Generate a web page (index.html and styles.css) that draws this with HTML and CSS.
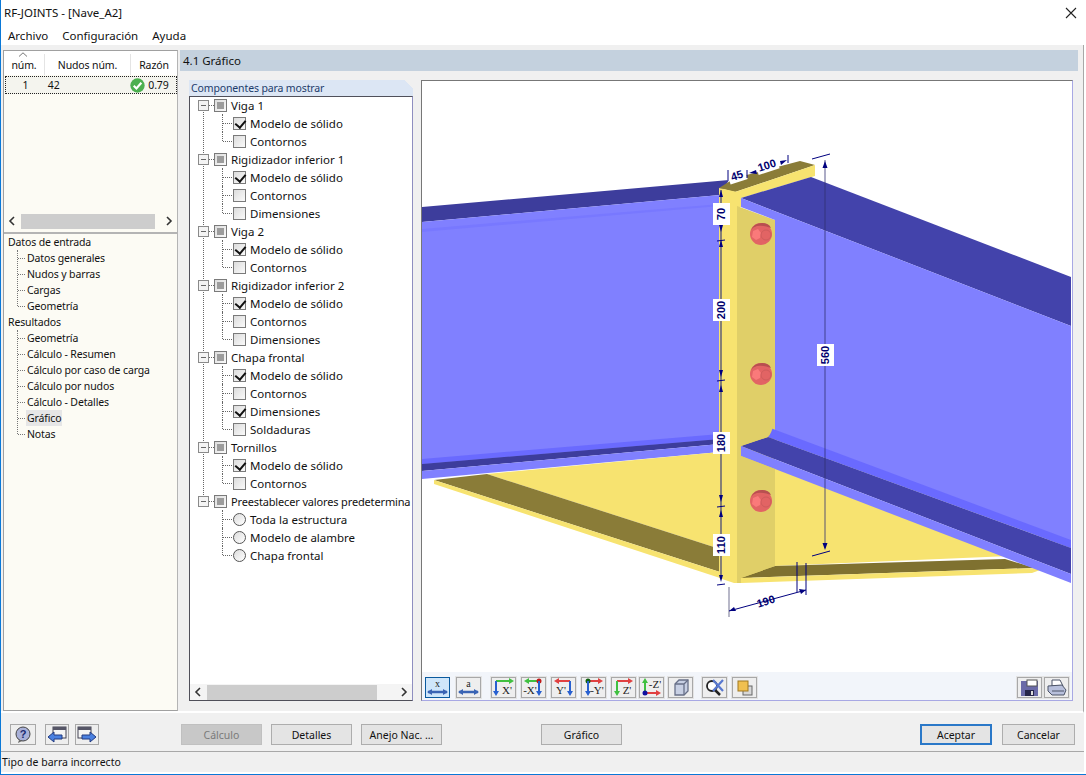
FILE: index.html
```html
<!DOCTYPE html>
<html lang="es">
<head>
<meta charset="utf-8">
<title>RF-JOINTS - [Nave_A2]</title>
<link rel="stylesheet" href="styles.css">
</head>
<body>
<div class="app">
  <header class="titlebar">
    <span class="title">RF-JOINTS - [Nave_A2]</span>
    <svg class="close" width="12" height="12" viewBox="0 0 12 12"><path d="M1 1L11 11M11 1L1 11" stroke="#222" stroke-width="1.1" fill="none"/></svg>
  </header>
  <nav class="menu"><span>Archivo</span><span>Configuración</span><span>Ayuda</span></nav>
  <main class="main">
    <aside class="side">
      <div class="thead">
        <span class="c1">núm.<svg class="sort" width="10" height="5" viewBox="0 0 10 5"><path d="M1 4.500L5 .8L9 4.500" stroke="#777" fill="none"/></svg></span><span class="c2">Nudos núm.</span><span class="c3">Razón</span>
      </div>
      <div class="trow">
        <span class="c1">1</span><span class="c2">42</span>
        <span class="c3 ok"><svg width="15" height="15" viewBox="0 0 14 14"><circle cx="7" cy="7" r="6.700" fill="#4caf50"/><path d="M3.500 7.200L6 9.800L10.600 4.400" stroke="#fff" stroke-width="2" fill="none"/></svg>0.79</span>
      </div>
      <div class="side-fill"></div>
      <div class="hscroll side-scroll">
        <svg width="8" height="10" viewBox="0 0 8 10"><path d="M6 1L2 5L6 9" stroke="#333" stroke-width="1.600" fill="none"/></svg>
        <div class="thumb"></div>
        <svg width="8" height="10" viewBox="0 0 8 10"><path d="M2 1L6 5L2 9" stroke="#333" stroke-width="1.600" fill="none"/></svg>
      </div>
      <div class="nav">
        <div class="nav-head">Datos de entrada</div>
        <ul class="nav-list">
          <li>Datos generales</li><li>Nudos y barras</li><li>Cargas</li><li>Geometría</li>
        </ul>
        <div class="nav-head">Resultados</div>
        <ul class="nav-list">
          <li>Geometría</li><li>Cálculo - Resumen</li><li>Cálculo por caso de carga</li><li>Cálculo por nudos</li><li>Cálculo - Detalles</li><li><span class="current">Gráfico</span></li><li>Notas</li>
        </ul>
      </div>
    </aside>
    <section class="content">
      <h1 class="head">4.1 Gráfico</h1>
      <div class="body">
        <div class="panel">
          <div class="tab">Componentes para mostrar</div>
          <div class="treebox">
            <div class="tree">
              <div class="group">
                <div class="parent"><i class="exp"></i><i class="box mixed"></i>Viga 1</div>
                <div class="kid"><i class="box on"></i>Modelo de sólido</div>
                <div class="kid"><i class="box"></i>Contornos</div>
              </div>
              <div class="group">
                <div class="parent"><i class="exp"></i><i class="box mixed"></i>Rigidizador inferior 1</div>
                <div class="kid"><i class="box on"></i>Modelo de sólido</div>
                <div class="kid"><i class="box"></i>Contornos</div>
                <div class="kid"><i class="box"></i>Dimensiones</div>
              </div>
              <div class="group">
                <div class="parent"><i class="exp"></i><i class="box mixed"></i>Viga 2</div>
                <div class="kid"><i class="box on"></i>Modelo de sólido</div>
                <div class="kid"><i class="box"></i>Contornos</div>
              </div>
              <div class="group">
                <div class="parent"><i class="exp"></i><i class="box mixed"></i>Rigidizador inferior 2</div>
                <div class="kid"><i class="box on"></i>Modelo de sólido</div>
                <div class="kid"><i class="box"></i>Contornos</div>
                <div class="kid"><i class="box"></i>Dimensiones</div>
              </div>
              <div class="group">
                <div class="parent"><i class="exp"></i><i class="box mixed"></i>Chapa frontal</div>
                <div class="kid"><i class="box on"></i>Modelo de sólido</div>
                <div class="kid"><i class="box"></i>Contornos</div>
                <div class="kid"><i class="box on"></i>Dimensiones</div>
                <div class="kid"><i class="box"></i>Soldaduras</div>
              </div>
              <div class="group">
                <div class="parent"><i class="exp"></i><i class="box mixed"></i>Tornillos</div>
                <div class="kid"><i class="box on"></i>Modelo de sólido</div>
                <div class="kid"><i class="box"></i>Contornos</div>
              </div>
              <div class="group last">
                <div class="parent long"><i class="exp"></i><i class="box mixed"></i>Preestablecer valores predetermina</div>
                <div class="kid"><i class="radio"></i>Toda la estructura</div>
                <div class="kid"><i class="radio"></i>Modelo de alambre</div>
                <div class="kid"><i class="radio"></i>Chapa frontal</div>
              </div>
            </div>
            <div class="hscroll tree-scroll">
              <svg width="8" height="10" viewBox="0 0 8 10"><path d="M6 1L2 5L6 9" stroke="#333" stroke-width="1.600" fill="none"/></svg>
              <div class="thumb"></div>
              <svg width="8" height="10" viewBox="0 0 8 10"><path d="M2 1L6 5L2 9" stroke="#333" stroke-width="1.600" fill="none"/></svg>
            </div>
          </div>
        </div>
        <div class="viewer">
          <svg class="scene" width="651" height="591" viewBox="422 81 651 591">
            <defs>
              <g id="bolt">
                <ellipse cx="0" cy="0" rx="11" ry="11" fill="#e26464"/>
                <path d="M-10 -4Q-7 -11 1 -11Q8 -11 10 -6Q2 -9 -4 -8Q-8 -7 -10 -4Z" fill="#b85050"/>
                <polygon points="-8,-3 -3,-5 0,-1 -1,4 -5,6 -9,3" fill="#fa7a7a"/>
                <circle cx="5" cy="1" r="5" fill="none" stroke="#cf5c5c"/>
              </g>
            </defs>
            <!-- left beam -->
            <polygon fill="#3d3d9c" points="422,207 729,180 720,195 422,222"/>
            <polygon fill="#8080ff" points="422,222 720,195 720,440 422,465"/>
            <polygon fill="#7878ff" points="422,229 720,204 720,206 422,232"/>
            <polygon fill="#6a6aff" points="422,459 720,434 720,439 422,464"/>
            <polygon fill="#3d3d9c" points="422,464 720,439 720,444 422,471"/>
            <polygon fill="#8080ff" points="422,471 720,444 720,452 422,479"/>
            <!-- left gusset -->
            <polygon fill="#f7e370" points="487,474 720,452 720,549"/>
            <polygon fill="#8a7c38" points="434,480 487,474 720,549 720,572"/>
            <polygon fill="#f7e370" points="434,480 720,572 720,578 434,484"/>
            <!-- plate -->
            <polygon fill="#8a7c38" points="719,188 735,178 800,161 815,165 735,192"/>
            <polygon fill="#f7e370" points="735,192 815,165 815,176 741,198 741,207 737,207 737,192"/>
            <polygon fill="#f7e370" points="719,188 737,192 737,583 734,583 719,578"/>
            <polygon fill="#e0cf68" points="737,206 775,220 775,566 741,583 737,583"/>
            <!-- right gusset -->
            <polygon fill="#f7e370" points="775,465 1010,556 775,566"/>
            <polygon fill="#7f7130" points="741,578 775,566 1005,559 1035,568"/>
            <polygon fill="#f7e370" points="741,578 1035,568 1040,570 1032,573 741,583"/>
            <!-- right beam -->
            <polygon fill="#4343ab" points="741,198 811,177 1071,277 1071,326"/>
            <path fill="#8080ff" d="M741 198L1071 326V548L775 434V220L741 207Z"/>
            <polygon fill="#6a6aff" points="765,426 1071,540 1071,548 765,436"/>
            <polygon fill="#4343ab" points="741,446 768,437 1071,548 1071,574"/>
            <path fill="#e0cf68" d="M775 405Q775 430 768 437L741 446V300H775Z"/>
            <polygon fill="#8080ff" points="741,446 1071,574 1071,583 741,456"/>
            <polygon fill="#e0cf68" points="741,456 775,469 775,566 741,578"/>
            <!-- bolts -->
            <use href="#bolt" x="761" y="234"/>
            <use href="#bolt" x="761" y="374"/>
            <use href="#bolt" x="761" y="501"/>
            <!-- dims -->
            <line x1="721" y1="190" x2="721" y2="578" stroke="#555577" stroke-width="1.400"/>
            <g fill="#00007f">
              <path d="M721 190l-2 7h4zM721 232l-2-7h4zM721 240l-2 7h4zM721 377l-2-7h4zM721 385l-2 7h4zM721 502l-2-7h4zM721 510l-2 7h4zM721 582l-2-7h4z"/>
            </g>
            <path d="M717 241l8-1M717 381l8-1M717 507l8-1M717 585l8-1" stroke="#00007f" fill="none"/>
            <line x1="825" y1="160" x2="825" y2="548" stroke="#303070" stroke-opacity=".4" stroke-width="2"/>
            <path d="M825 161l-2.500 7h5zM825 550l-2.500-7h5z" fill="#00007f"/>
            <path d="M812 159l18-5M812 556l18-5" stroke="#00007f" fill="none"/>
            <line x1="729" y1="587" x2="729" y2="617" stroke="#b8b8c8" stroke-width="2"/>
            <path d="M797 562V592M806 563V595" stroke="#00007f" fill="none"/>
            <path d="M729 611L806 590" stroke="#00007f"/>
            <path d="M729 611l7 0l-2-4zM806 590l-7-1l2 5z" fill="#00007f"/>
            <g class="dim-box">
              <rect x="713" y="203" width="17" height="22"/>
              <rect x="713" y="299" width="17" height="22"/>
              <rect x="713" y="432" width="17" height="22"/>
              <rect x="713" y="534" width="17" height="22"/>
              <rect x="817" y="344" width="17" height="22"/>
            </g>
            <g class="dim-text">
              <text transform="translate(725 214) rotate(-90)">70</text>
              <text transform="translate(725 310) rotate(-90)">200</text>
              <text transform="translate(725 443) rotate(-90)">180</text>
              <text transform="translate(725 545) rotate(-90)">110</text>
              <text transform="translate(829 355) rotate(-90)">560</text>
              <rect class="dim-bg" x="-9" y="-6" width="18" height="13" transform="translate(737 175) rotate(-18)"/>
              <rect class="dim-bg" x="-11" y="-6" width="22" height="13" transform="translate(767 165) rotate(-18)"/>
              <text transform="translate(738 179) rotate(-18)">45</text>
              <text transform="translate(768 169) rotate(-18)">100</text>
              <text transform="translate(767 605) rotate(-18)">190</text>
            </g>
            <path d="M728 170V180M747 170V178M788 155V163" stroke="#00007f" fill="none"/>
            <path d="M749 173l7-3l1 4zM787 160l-7 1l1 4z" fill="#00007f"/>
          </svg>
          <div class="tools">
            <div class="tgroup">
              <button class="tbtn sel"><svg width="23" height="19" viewBox="0 0 23 19"><text x="11.500" y="9" class="ti-s" text-anchor="middle">x</text><path d="M2 14H21" stroke="#3a64b4" stroke-width="2.500"/><path d="M1 14l5-3v6zM22 14l-5-3v6z" fill="#3a64b4"/></svg></button>
              <button class="tbtn"><svg width="23" height="19" viewBox="0 0 23 19"><text x="11.500" y="9" class="ti-s" text-anchor="middle">a</text><path d="M2 14H21" stroke="#3a64b4" stroke-width="2.500"/><path d="M1 14l5-3v6zM22 14l-5-3v6z" fill="#3a64b4"/></svg></button>
            </div>
            <div class="tgroup axes">
              <button class="tbtn"><svg width="23" height="19" viewBox="0 0 23 19"><path d="M4 3H20" stroke="#40c040" stroke-width="2"/><path d="M22 3l-5-3v6z" fill="#40c040"/><path d="M4 3V16" stroke="#2860d0" stroke-width="2"/><path d="M4 18l-3-5h6z" fill="#2860d0"/><text x="15" y="16" class="ti-t" text-anchor="middle">X'</text></svg></button>
              <button class="tbtn"><svg width="23" height="19" viewBox="0 0 23 19"><path d="M4 3H18" stroke="#40c040" stroke-width="2"/><path d="M2 3l5-3v6z" fill="#40c040"/><circle cx="17" cy="3" r="2.500" fill="#c01818"/><path d="M17 3V16" stroke="#2860d0" stroke-width="2"/><path d="M17 18l-3-5h6z" fill="#2860d0"/><text x="8" y="16" class="ti-t" text-anchor="middle">-X'</text></svg></button>
              <button class="tbtn"><svg width="23" height="19" viewBox="0 0 23 19"><path d="M4 3H18" stroke="#e04040" stroke-width="2"/><path d="M2 3l5-3v6z" fill="#e04040"/><path d="M18 3V16" stroke="#2860d0" stroke-width="2"/><path d="M18 18l-3-5h6z" fill="#2860d0"/><text x="9" y="16" class="ti-t" text-anchor="middle">Y'</text></svg></button>
              <button class="tbtn"><svg width="23" height="19" viewBox="0 0 23 19"><path d="M6 3H18" stroke="#e04040" stroke-width="2"/><path d="M21 3l-5-3v6z" fill="#e04040"/><circle cx="6" cy="3" r="2.500" fill="#106010"/><path d="M6 3V16" stroke="#2860d0" stroke-width="2"/><path d="M6 18l-3-5h6z" fill="#2860d0"/><text x="15" y="16" class="ti-t" text-anchor="middle">-Y'</text></svg></button>
              <button class="tbtn"><svg width="23" height="19" viewBox="0 0 23 19"><path d="M5 3H18" stroke="#e04040" stroke-width="2"/><path d="M21 3l-5-3v6z" fill="#e04040"/><path d="M5 3V16" stroke="#40c040" stroke-width="2"/><path d="M5 18l-3-5h6z" fill="#40c040"/><text x="15" y="16" class="ti-t" text-anchor="middle">Z'</text></svg></button>
              <button class="tbtn"><svg width="23" height="19" viewBox="0 0 23 19"><path d="M5 3V15" stroke="#40c040" stroke-width="2"/><path d="M5 0l-3 5h6z" fill="#40c040"/><path d="M5 15H18" stroke="#e04040" stroke-width="2"/><path d="M21 15l-5-3v6z" fill="#e04040"/><circle cx="5" cy="15" r="2.500" fill="#1010a0"/><text x="15" y="10" class="ti-t" text-anchor="middle">-Z'</text></svg></button>
              <button class="tbtn"><svg width="19" height="19" viewBox="0 0 19 19"><path d="M4 6L8 2H17V13L13 17H4Z" fill="#c8d0e4" stroke="#687088" stroke-width="1.300"/><path d="M4 6H13V17M13 6L17 2" fill="none" stroke="#687088" stroke-width="1.300"/></svg></button>
            </div>
            <div class="tgroup">
              <button class="tbtn"><svg width="21" height="19" viewBox="0 0 21 19"><circle cx="8" cy="8" r="5" fill="#fff" stroke="#222" stroke-width="1.800"/><path d="M11 12l5 5" stroke="#222" stroke-width="2.500"/><path d="M9 2L19 13M19 2L9 13" stroke="#5878d0" stroke-width="2.200"/></svg></button>
              <button class="tbtn"><svg width="19" height="19" viewBox="0 0 19 19"><rect x="8" y="8" width="9" height="9" fill="#d8d8d8" stroke="#666"/><rect x="3" y="3" width="10" height="10" fill="#f0c050" stroke="#a07820"/></svg></button>
            </div>
            <div class="tgroup end">
              <button class="tbtn"><svg width="19" height="19" viewBox="0 0 19 19"><path d="M1 3H18V18H1Z" fill="#6a6aa8"/><rect x="7" y="2" width="10" height="6" fill="#fff" stroke="#555"/><rect x="5" y="12" width="9" height="6" fill="#26264a"/><rect x="11" y="13" width="2" height="4" fill="#ddd"/></svg></button>
              <button class="tbtn"><svg width="21" height="19" viewBox="0 0 21 19"><path d="M6 2H14L17 8H6Z" fill="#fff" stroke="#4c5468"/><path d="M2 8L16 7L20 12L18 17H6L2 13Z" fill="#b8c0dc" stroke="#4c5468"/><path d="M6 13H18" stroke="#4c5468"/></svg></button>
            </div>
          </div>
        </div>
      </div>
    </section>
  </main>
  <footer class="footer">
    <div class="icons">
      <button class="ibtn help"><svg width="20" height="18" viewBox="0 0 20 18"><circle cx="10" cy="8" r="7" fill="#a8b0d8" stroke="#444"/><path d="M6 14l-1 3l4-2z" fill="#666"/><text x="10" y="12" class="ti-q" text-anchor="middle">?</text></svg></button>
      <button class="ibtn"><svg width="20" height="18" viewBox="0 0 20 18"><rect x="6" y="1" width="13" height="11" fill="#f4f4f4" stroke="#445"/><rect x="6" y="1" width="13" height="3" fill="#556"/><path d="M1 11l6-5v3h8v4H7v3z" fill="#4a80e0" stroke="#223a80"/></svg></button>
      <button class="ibtn"><svg width="20" height="18" viewBox="0 0 20 18"><rect x="1" y="1" width="13" height="11" fill="#f4f4f4" stroke="#445"/><rect x="1" y="1" width="13" height="3" fill="#556"/><path d="M19 11l-6-5v3H5v4h8v3z" fill="#4a80e0" stroke="#223a80"/></svg></button>
    </div>
    <div class="actions">
      <button class="btn off">Cálculo</button>
      <button class="btn">Detalles</button>
      <button class="btn">Anejo Nac. ...</button>
    </div>
    <button class="btn graf">Gráfico</button>
    <div class="confirm">
      <button class="btn ok-btn">Aceptar</button>
      <button class="btn">Cancelar</button>
    </div>
  </footer>
  <div class="status">Tipo de barra incorrecto</div>
</div>
</body>
</html>
```
FILE: styles.css
```css
* { box-sizing: border-box; }
html, body { margin: 0; padding: 0; }
body {
  width: 1086px;
  height: 775px;
  overflow: hidden;
  background: #fff;
  font-family: "Noto Sans", "Liberation Sans", sans-serif;
  font-size: 11.5px;
  color: #111;
}
.app {
  width: 1086px;
  height: 775px;
  display: flex;
  flex-direction: column;
  border-left: 1px solid #0a78d7;
  border-bottom: 1px solid #0a78d7;
}
.titlebar {
  height: 25px;
  flex: none;
  display: flex;
  align-items: center;
  justify-content: space-between;
  padding: 0 9px 0 3px;
}
.close { display: block; }
.menu {
  height: 20px;
  flex: none;
  display: flex;
  gap: 14px;
  align-items: center;
  padding-left: 7px;
}
.main {
  height: 668px;
  flex: none;
  display: flex;
  gap: 2px;
  padding: 5px 5px 0 2px;
  margin-right: 2px;
  background: #f0f0f0;
  border-right: 1px solid #a8a8a8;
  border-bottom: 2px solid #fff;
}
.side {
  width: 175px;
  flex: none;
  display: flex;
  flex-direction: column;
  background: #fcfbf4;
  border: 1px solid #a0a0a0;
  border-right-color: #b4b4b4;
  font-size: 10.5px;
  letter-spacing: -0.13px;
}
.thead {
  height: 24px;
  flex: none;
  display: flex;
  align-items: center;
  background: #fff;
  padding-top: 3px;
}
.thead span { height: 100%; display: flex; align-items: center; justify-content: center; border-right: 1px solid #e4e4e4; position: relative; }
.thead .c3 { border-right: 0; }
.sort { position: absolute; top: -2px; left: 14px; }
.c1 { width: 41px; }
.c2 { width: 86px; }
.c3 { width: 46px; }
.trow {
  height: 18px;
  flex: none;
  display: flex;
  align-items: center;
  border: 1px dotted #222;
  background: #f4f4ee;
  margin: 1px 0 0 1px;
}
.trow .c1 { width: 39px; text-align: center; }
.trow .c2 { width: 84px; padding-left: 3px; }
.ok { display: flex; align-items: center; gap: 3px; white-space: nowrap; margin-left: 2px; }
.side-fill { flex: 1; }
.hscroll {
  display: flex;
  align-items: center;
  justify-content: space-between;
  height: 16px;
  flex: none;
  padding: 0 4px;
  background: #f0f0f0;
}
.side-scroll { margin-bottom: 3px; background: #fcfbf4; }
.thumb { flex: 1; height: 15px; background: #cdcdcd; margin: 0 10px 0 5px; }
.nav {
  height: 478px;
  flex: none;
  border-top: 2px solid #b4b4b4;
}
.nav-head { height: 16px; line-height: 16px; padding-left: 4px; }
.nav-list {
  list-style: none;
  margin: 0;
  padding: 0 0 0 23px;
  position: relative;
}
.nav-list::before {
  content: "";
  position: absolute;
  left: 13px;
  top: 0;
  bottom: 8px;
  border-left: 1px dotted #777;
}
.nav-list li { height: 16px; line-height: 16px; position: relative; }
.nav-list li::before {
  content: "";
  position: absolute;
  left: -9px;
  top: 8px;
  width: 7px;
  border-top: 1px dotted #777;
}
.current { background: #e6e6e6; display: inline-block; padding: 0 1px; margin-left: -1px; }
.content { flex: 1; display: flex; flex-direction: column; min-width: 0; }
.head {
  margin: 0;
  height: 21px;
  flex: none;
  padding-left: 3px;
  line-height: 21px;
  font-size: 11.5px;
  font-weight: 400;
  background: #c4d1de;
}
.body {
  flex: 1;
  display: flex;
  gap: 8px;
  padding: 9px 5px 10px 9px;
  min-height: 0;
}
.panel { width: 224px; flex: none; display: flex; flex-direction: column; }
.tab {
  height: 16px;
  flex: none;
  padding-left: 2px;
  line-height: 16px;
  font-size: 10.5px;
  letter-spacing: -0.13px;
  color: #1c3d6c;
  background: linear-gradient(225deg, transparent 6px, #dce6f4 6px);
}
.treebox {
  flex: 1;
  display: flex;
  flex-direction: column;
  min-height: 0;
  background: #fff;
  border: 1px solid #50505a;
  border-right-color: #8e8ec0;
  overflow: hidden;
}
.tree { flex: 1; overflow: hidden; padding: 0 0 0 8px; white-space: nowrap; }
.group { position: relative; top: -1px; }
.group::before {
  content: "";
  position: absolute;
  left: 5px;
  top: 14px;
  bottom: -5px;
  border-left: 1px dotted #666;
}
.group.last::before { display: none; }
.parent, .kid { height: 18px; display: flex; align-items: center; position: relative; }
.parent { padding-left: 16px; gap: 4px; }
.parent.long { font-size: 11px; letter-spacing: -0.15px; }
.kid { padding-left: 35px; gap: 4px; }
.kid::before {
  content: "";
  position: absolute;
  left: 24px;
  top: 0;
  bottom: 0;
  border-left: 1px dotted #666;
}
.kid:last-child::before { bottom: 9px; }
.kid::after {
  content: "";
  position: absolute;
  left: 25px;
  top: 9px;
  width: 9px;
  border-top: 1px dotted #666;
}
.parent::after {
  content: "";
  position: absolute;
  left: 11px;
  top: 9px;
  width: 5px;
  border-top: 1px dotted #666;
}
.exp {
  position: absolute;
  left: 0;
  top: 4px;
  width: 11px;
  height: 11px;
  border: 1px solid #8a8a8a;
  background: linear-gradient(#8a8a8a, #444) no-repeat center / 5px 1px, #f4f4f4;
}
.box {
  width: 13px;
  height: 13px;
  flex: none;
  display: block;
  border: 1px solid #7a7a7a;
  background: linear-gradient(135deg, #dcdcdc, #fafafa);
  position: relative;
}
.box.mixed::after {
  content: "";
  position: absolute;
  inset: 2px;
  background: #9c9c9c;
}
.box.on::after {
  content: "";
  position: absolute;
  left: 3px;
  top: 0;
  width: 5px;
  height: 8px;
  border: solid #111;
  border-width: 0 2px 2px 0;
  transform: rotate(40deg);
}
.radio {
  width: 13px;
  height: 13px;
  flex: none;
  display: block;
  border: 1px solid #555;
  border-radius: 50%;
  background: linear-gradient(135deg, #dcdcdc, #fff);
}
.tree-scroll { height: 16px; background: #f4f4f4; }
.tree-scroll .thumb { flex: none; width: 170px; margin: 0 auto 0 5px; }
.viewer {
  flex: 1;
  min-width: 0;
  display: flex;
  flex-direction: column;
  background: #fff;
  border: 1px solid #a8a8e4;
  border-top-color: #777;
  border-left-color: #777;
}
.scene { display: block; flex: none; }
.tools {
  flex: 1;
  display: flex;
  gap: 10px;
  align-items: center;
  padding: 3px 3px 0 3px;
  background: #f2f5fa;
}
.tgroup { display: flex; gap: 5px; }
.tgroup:first-child { gap: 6px; }
.axes .tbtn:nth-child(6) { margin-left: -2px; }
.axes .tbtn:nth-child(7) { margin-left: -1px; }
.tgroup:nth-child(3) { margin-left: -1px; }
.tgroup.end { margin-left: auto; gap: 2px; }
.tbtn {
  width: 25px;
  height: 21px;
  padding: 0;
  display: flex;
  align-items: center;
  justify-content: center;
  background: #eeeeee;
  border: 1px solid #a8a8a8;
  outline: 1px solid #e4e4e4;
}
.tbtn.sel { background: #cfe6fa; border-color: #0a5a9e; outline: 0; }
.tbtn svg { display: block; }
.ti-t { font: 11px "Liberation Serif", serif; fill: #222; }
.ti-s { font: 10px "Liberation Serif", serif; fill: #222; }
.ti-q { font: bold 11px "Liberation Sans", sans-serif; fill: #1a2a70; }
.dim-box rect { fill: #fff; }
.dim-bg { fill: #fff; }
.dim-text text { font: bold 11px "Liberation Sans", sans-serif; fill: #00006e; text-anchor: middle; }
.footer {
  height: 39px;
  flex: none;
  display: flex;
  align-items: center;
  padding: 5px 0 0 9px;
  background: #f0f0f0;
  border-bottom: 1px solid #a8a8a8;
  margin-right: 2px;
}
.icons { display: flex; gap: 6px; width: 171px; flex: none; }
.ibtn {
  width: 24px;
  height: 21px;
  padding: 0;
  display: flex;
  align-items: center;
  justify-content: center;
  background: #eee;
  border: 1px solid #a8a8a8;
}
.help { width: 26px; margin-right: 3px; }
.actions { display: flex; gap: 9px; width: 360px; flex: none; }
.btn {
  width: 81px;
  height: 21px;
  padding: 0;
  font: 10.5px "Noto Sans", "Liberation Sans", sans-serif;
  color: #111;
  background: #e4e4e4;
  border: 1px solid #adadad;
}
.btn.off { background: #c8c8c8; color: #7a7a7a; border-color: #c0c0c0; }
.confirm { display: flex; gap: 10px; margin-left: auto; margin-right: 9px; }
.confirm .btn { width: 73px; }
.confirm .ok-btn { width: 72px; border: 2px solid #2a78c8; }
.status {
  height: 20px;
  flex: none;
  padding-left: 1px;
  line-height: 20px;
  font-size: 10.5px;
  background: #f0f0f0;
  margin-right: 2px;
}
```
